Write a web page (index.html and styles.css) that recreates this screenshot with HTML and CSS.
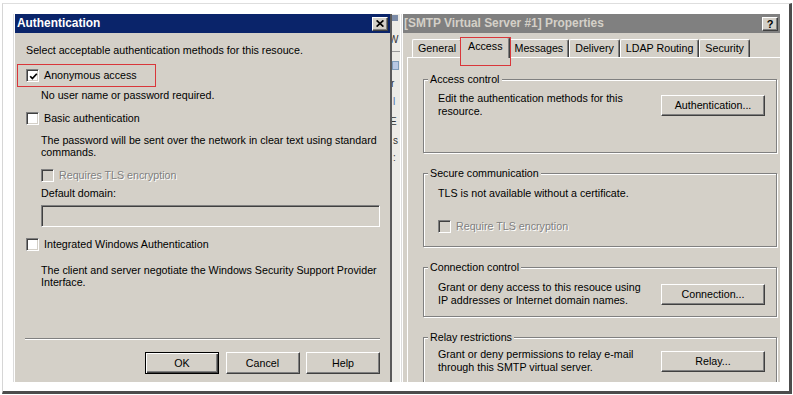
FILE: index.html
```html
<!DOCTYPE html>
<html>
<head>
<meta charset="utf-8">
<title>Authentication</title>
<link rel="stylesheet" href="styles.css">
</head>
<body>
<div class="frame">
  <section class="dlg dlg-auth">
    <header class="titlebar titlebar-active">
      <span class="title">Authentication</span>
      <span class="capbtn"><svg viewBox="0 0 8 7" width="8" height="7"><path d="M0.6 0.4 L7.4 6.6 M7.4 0.4 L0.6 6.6" stroke="#000" stroke-width="1.7" fill="none"/></svg></span>
    </header>
    <div class="auth-body">
      <p class="intro">Select acceptable authentication methods for this resouce.</p>
      <div class="opt opt-hl"><span class="cb"><svg viewBox="0 0 9 9" width="9" height="9"><path d="M1.2 4.2 L3.4 6.6 L7.8 1.8" stroke="#000" stroke-width="1.7" fill="none"/></svg></span><span>Anonymous access</span></div>
      <p class="desc desc-anon">No user name or password required.</p>
      <div class="opt opt-basic"><span class="cb"></span><span>Basic authentication</span></div>
      <p class="desc desc-basic">The password will be sent over the network in clear text using standard<br>commands.</p>
      <div class="opt opt-sub opt-disabled"><span class="cb cb-disabled"></span><span>Requires TLS encryption</span></div>
      <p class="desc desc-domain">Default domain:</p>
      <div class="field"></div>
      <div class="opt opt-iwa"><span class="cb"></span><span>Integrated Windows Authentication</span></div>
      <p class="desc desc-iwa">The client and server negotiate the Windows Security Support Provider<br>Interface.</p>
      <footer class="auth-foot">
        <div class="sep"></div>
        <div class="btnrow">
          <span class="btn btn-default">OK</span>
          <span class="btn">Cancel</span>
          <span class="btn">Help</span>
        </div>
      </footer>
    </div>
  </section>

  <div class="strip">
    <span class="frag frag-title"></span>
    <span class="frag frag-w">W</span>
    <span class="frag frag-line"></span>
    <span class="frag frag-box"></span>
    <span class="frag frag-r">r</span>
    <span class="frag frag-m">l</span>
    <span class="frag frag-e">E</span>
    <span class="frag frag-s">s</span>
    <span class="frag frag-c">:</span>
  </div>

  <section class="dlg dlg-props">
    <header class="titlebar titlebar-inactive">
      <span class="title">[SMTP Virtual Server #1] Properties</span>
      <span class="capbtn capbtn-help">?</span>
    </header>
    <nav class="tabs">
      <span class="tab">General</span>
      <span class="tab tab-active">Access</span>
      <span class="tab">Messages</span>
      <span class="tab">Delivery</span>
      <span class="tab">LDAP Routing</span>
      <span class="tab">Security</span>
    </nav>
    <div class="panel">
      <div class="group group-access">
        <span class="group-label">Access control</span>
        <div class="group-row">
          <p class="gtext">Edit the authentication methods for this<br>resource.</p>
          <span class="btn btn-wide">Authentication...</span>
        </div>
      </div>
      <div class="group group-secure">
        <span class="group-label">Secure communication</span>
        <p class="gtext tls-note">TLS is not available without a certificate.</p>
        <div class="opt opt-tls opt-disabled"><span class="cb cb-disabled"></span><span>Require TLS encryption</span></div>
      </div>
      <div class="group group-conn">
        <span class="group-label">Connection control</span>
        <div class="group-row">
          <p class="gtext">Grant or deny access to this resouce using<br>IP addresses or Internet domain names.</p>
          <span class="btn btn-wide">Connection...</span>
        </div>
      </div>
      <div class="group group-relay">
        <span class="group-label">Relay restrictions</span>
        <div class="group-row">
          <p class="gtext">Grant or deny permissions to relay e-mail<br>through this SMTP virtual server.</p>
          <span class="btn btn-wide">Relay...</span>
        </div>
      </div>
    </div>
  </section>
</div>
</body>
</html>
```

FILE: styles.css
```css
* { box-sizing: border-box; margin: 0; padding: 0; }

body {
  margin: 0;
  background: #fff;
  font-family: "Liberation Sans", Arial, sans-serif;
  font-size: 10.7px;
  line-height: 13px;
  color: #000;
}

.frame {
  margin: 3px 0 0 2px;
  width: 790px;
  height: 391px;
  border-left: 1px solid #d6d6d6;
  border-top: 1px solid #dedede;
  border-right: 3px solid #4c4c4c;
  border-bottom: 3px solid #4c4c4c;
  padding: 10px 0 0 10px;
  display: flex;
  align-items: flex-start;
  overflow: hidden;
}

/* ---------- dialogs ---------- */
.dlg {
  background: #d4d0c8;
  height: 368px;
  display: flex;
  flex-direction: column;
  border-left: 1px solid #dcdcdc;
  padding-left: 1px;
  box-shadow: inset 1px 0 #fff;
  overflow: hidden;
}

.dlg-auth { width: 377px; }
.dlg-props { width: 379px; }

.titlebar {
  height: 19px;
  flex: none;
  display: flex;
  align-items: center;
  justify-content: space-between;
  padding: 0 2px 0 2px;
  font-weight: bold;
  font-size: 11.9px;
  white-space: nowrap;
}
.titlebar-active { background: #0a246a; color: #fff; }
.titlebar-inactive { background: #808080; color: #d4d0c8; padding-left: 1px; }

.capbtn {
  width: 16px;
  height: 14px;
  background: #d4d0c8;
  border: 1px solid;
  border-color: #fff #404040 #404040 #fff;
  box-shadow: inset -1px -1px #808080;
  display: flex;
  align-items: center;
  justify-content: center;
  color: #000;
}
.capbtn-help {
  font-size: 11px;
  font-weight: bold;
  line-height: 12px;
}

/* ---------- auth dialog body ---------- */
.auth-body {
  flex: 1;
  display: flex;
  flex-direction: column;
  padding: 0 10px 8px 11px;
  white-space: nowrap;
}

.intro { margin-top: 11px; }

.opt {
  display: flex;
  align-items: center;
  gap: 5px;
  height: 13px;
}

.cb {
  width: 13px;
  height: 13px;
  flex: none;
  background: #fff;
  border: 1px solid;
  border-color: #808080 #fff #fff #808080;
  box-shadow: inset 1px 1px #404040, inset -1px -1px #d4d0c8;
  display: flex;
  align-items: center;
  justify-content: center;
}
.cb svg { margin: 1px 0 0 1px; }
.cb-disabled { background: #d4d0c8; }

.opt-disabled { color: #808080; text-shadow: 1px 1px #fff; }

.opt-hl {
  margin: 7px 0 0 -9px;
  width: 139px;
  height: 23px;
  border: 1px solid #d9363a;
  padding-left: 8px;
}

.desc { margin-left: 15px; }
.desc-anon { margin-top: 2px; }
.opt-basic { margin-top: 10px; }
.desc-basic { margin-top: 9px; line-height: 12px; }
.opt-sub { margin: 11px 0 0 15px; }
.desc-domain { margin-top: 5px; line-height: 12px; }

.field {
  margin: 6px 0 0 15px;
  height: 22px;
  background: #d4d0c8;
  border: 1px solid;
  border-color: #808080 #fff #fff #808080;
  box-shadow: inset 1px 1px #404040, inset -1px -1px #d4d0c8;
}

.opt-iwa { margin-top: 11px; }
.desc-iwa { margin-top: 13px; line-height: 12px; }

.auth-foot { margin-top: auto; }

.sep {
  margin-left: -1px;
  height: 2px;
  border-top: 1px solid #808080;
  border-bottom: 1px solid #fff;
}

.btnrow {
  margin-top: 12px;
  display: flex;
  justify-content: flex-end;
  gap: 6.5px;
}

.btn {
  width: 74px;
  height: 22px;
  display: flex;
  align-items: center;
  justify-content: center;
  background: #d4d0c8;
  border: 1px solid;
  border-color: #fff #404040 #404040 #fff;
  box-shadow: inset -1px -1px #808080, inset 1px 1px #d4d0c8;
  white-space: nowrap;
}
.btn-default {
  border: 1px solid #000;
  box-shadow: inset 1px 1px #fff, inset -1px -1px #404040, inset -2px -2px #808080;
}
.btn-wide { width: 104px; height: 21px; flex: none; }

/* ---------- strip of background window ---------- */
.strip {
  width: 11px;
  height: 368px;
  flex: none;
  background: #ecebe6;
  border-left: 2px solid #5a5a5a;
  border-right: 1px solid #fff;
  display: flex;
  flex-direction: column;
  overflow: hidden;
  font-size: 10px;
  line-height: 10px;
  color: #333;
}
.frag { display: block; flex: none; }
.frag-title { margin-top: 1px; height: 6px; width: 6px; background: #7a8aa6; }
.frag-w { margin: 14px 0 0 -3px; }
.frag-line { margin-top: 6px; height: 1px; background: #9a9a9a; }
.frag-box { margin-top: 9px; height: 9px; width: 7px; background: #b9c9e3; border: 1px solid #7f9db9; }
.frag-r { margin: 9px 0 0 -1px; }
.frag-m { margin: 8px 0 0 1px; color: #4a6ea9; }
.frag-e { margin: 10px 0 0 -2px; }
.frag-s { margin: 9px 0 0 1px; }
.frag-c { margin: 7px 0 0 1px; }

/* ---------- properties dialog ---------- */
.tabs {
  height: 24px;
  flex: none;
  display: flex;
  align-items: flex-end;
  padding-left: 9px;
  white-space: nowrap;
}

.tab {
  height: 18px;
  padding: 0 5px;
  line-height: 16px;
  border-top: 1px solid #fff;
  border-left: 1px solid #fff;
  border-right: 1px solid #404040;
  box-shadow: inset -1px 0 #808080;
  border-radius: 2px 2px 0 0;
}

.tab-active {
  position: relative;
  z-index: 1;
  height: 21px;
  margin: 0 -2px -1px -2px;
  padding: 0 7px;
  line-height: 17px;
  background: #d4d0c8;
}
.tab-active::after {
  content: "";
  position: absolute;
  left: -1px;
  right: -2px;
  top: -1px;
  height: 27px;
  border: 1px solid #d9363a;
}

.panel {
  margin-left: 4px;
  width: 400px;
  flex: 1;
  border-top: 1px solid #fff;
  border-left: 1px solid #fff;
  box-shadow: inset 1px 0 #d4d0c8;
  display: flex;
  flex-direction: column;
}

.group {
  margin: 20px 0 0 15px;
  width: 354px;
  border: 1px solid #808080;
  box-shadow: inset 1px 1px #fff, 1px 1px #fff;
  padding: 0 11px 0 14px;
  flex: none;
  white-space: nowrap;
}
.group-access { margin-top: 21px; height: 74px; }
.group-secure { height: 74px; }
.group-conn { height: 50px; }
.group-relay { height: 74px; }

.group-label {
  display: block;
  width: fit-content;
  margin: -7px 0 0 -10px;
  padding: 0 2px;
  background: #d4d0c8;
}

.group-row {
  display: flex;
  align-items: center;
  justify-content: space-between;
}
.group-access .group-row { margin-top: 6px; }
.group-conn .group-row { margin-top: 7px; }
.group-relay .group-row { margin-top: 4px; }

.tls-note { margin-top: 7px; }
.opt-tls { margin-top: 20px; }
```
